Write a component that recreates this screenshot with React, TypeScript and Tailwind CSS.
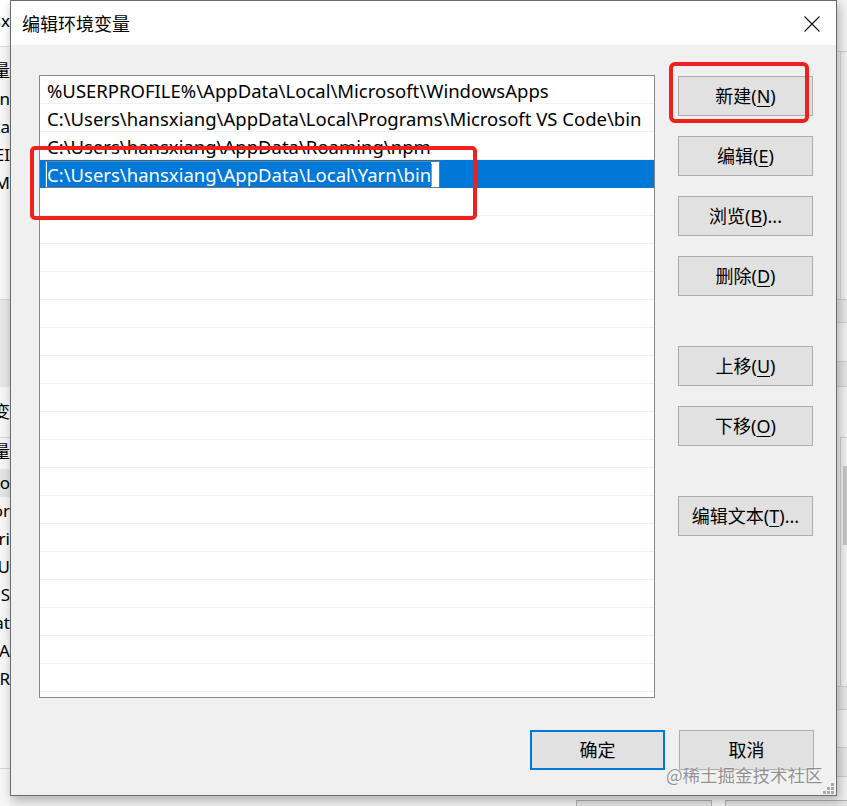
import React from "react"

const PATHS = [
  "%USERPROFILE%\\AppData\\Local\\Microsoft\\WindowsApps",
  "C:\\Users\\hansxiang\\AppData\\Local\\Programs\\Microsoft VS Code\\bin",
  "C:\\Users\\hansxiang\\AppData\\Roaming\\npm",
]
const EDITING = "C:\\Users\\hansxiang\\AppData\\Local\\Yarn\\bin"
const EMPTY_ROWS = Array.from({ length: 19 })

function Btn({ children, primary = false }: { children: React.ReactNode; primary?: boolean }) {
  return (
    <div
      className={`flex h-10 w-[135px] shrink-0 items-center justify-center bg-[#e1e1e1] text-[18px] leading-none text-black ${
        primary ? "border-2 border-[#0078d7]" : "border border-[#adadad]"
      }`}
    >
      {children}
    </div>
  )
}

function Key({ label, k, tail = "" }: { label: string; k: string; tail?: string }) {
  return (
    <span className="whitespace-nowrap">
      {label}(<span className="underline underline-offset-[3px] decoration-1">{k}</span>){tail}
    </span>
  )
}

// partial text of the window behind the dialog, clipped on the right edge
function Peek({ text, className = "" }: { text: string; className?: string }) {
  return (
    <div className={`flex h-[28px] items-center justify-end overflow-hidden whitespace-nowrap text-[17px] ${className}`}>
      {text}
    </div>
  )
}

export default function App() {
  return (
    <div className="relative h-[806px] w-[847px] overflow-hidden bg-[#f0f0f0] font-['Noto_Sans','Noto_Sans_CJK_SC',sans-serif] text-black">
      {/* window behind: left strip */}
      <div className="absolute left-0 top-0 flex h-full w-[10px] flex-col overflow-hidden bg-[#f6f6f6]">
        <div className="flex h-[47px] items-center justify-end overflow-hidden whitespace-nowrap border-b border-[#dcdcdc] bg-white pb-1 text-[17px]">
          Path sx
        </div>
        <div className="h-[10px]" />
        <Peek text="环境变量" />
        <Peek text="Python" />
        <Peek text="Data" />
        <Peek text="TEMP_EI" />
        <Peek text="TEM" />
        <div className="h-[102px]" />
        <div className="h-[88px] border-t border-[#d4d4d4] bg-[#e6e6e6]" />
        <Peek text="系统变" className="h-[50px]" />
        <div className="border-t border-[#d4d4d4]" />
        <Peek text="环境变量" />
        <Peek text="Co" className="mt-[3px] bg-[#e4e4e4]" />
        <Peek text="Dor" />
        <Peek text="Dri" />
        <Peek text="NU" />
        <Peek text="OS" />
        <Peek text="Pat" />
        <Peek text="PA" />
        <Peek text="PR" />
        <div className="h-[76px] border-b border-[#d4d4d4]" />
      </div>

      {/* window behind: right strip */}
      <div className="absolute right-0 top-0 flex h-full w-[11px] flex-col bg-[#f0f0f0]">
        <div className="h-[52px] border-b border-[#cfcfcf] bg-[#f3f3f3]" />
        <div className="ml-[4px] h-[247px] border-l border-[#d8d8d8]" />
        <div className="h-[23px] border-t border-[#cfcfcf] bg-[#e6e6e6]" />
        <div className="h-[39px] border-t border-[#cfcfcf]" />
        <div className="h-[25px] border-t border-[#cfcfcf] bg-[#e3e3e3]" />
        <div className="h-[51px] border-t border-[#cfcfcf]" />
        <div className="ml-[4px] flex h-[249px] justify-end border-l border-t border-[#cfcfcf]">
          <div className="mt-[28px] h-[79px] w-[4px] bg-[#c4c4c4]" />
        </div>
        <div className="h-[23px] border-t border-[#cfcfcf] bg-[#e4e4e4]" />
        <div className="h-[38px] border-t border-[#cfcfcf]" />
        <div className="h-[29px] border-t border-[#cfcfcf] bg-[#e6e6e6]" />
        <div className="flex-1 border-t border-[#cfcfcf]" />
      </div>

      {/* window behind: bottom buttons peeking out */}
      <div className="absolute left-[576px] top-[800px] h-[20px] w-[136px] border border-[#adadad] bg-[#e1e1e1]" />
      <div className="absolute left-[725px] top-[800px] h-[20px] w-[136px] border border-[#adadad] bg-[#e1e1e1]" />

      {/* dialog */}
      <div className="absolute left-[10px] top-0 flex h-[796px] w-[827px] flex-col border border-[#6b6b6b] bg-[#f0f0f0] shadow-[2px_4px_10px_rgba(0,0,0,0.28)]">
        <div className="flex h-[44px] shrink-0 items-center justify-between bg-white pl-[11px] pr-[16px]">
          <span className="text-[18px] leading-none font-['Noto_Sans_CJK_SC',sans-serif]">编辑环境变量</span>
          <svg width="16" height="16" viewBox="0 0 16 16" className="mt-px">
            <path d="M0.5 0.5 L15.5 15.5 M15.5 0.5 L0.5 15.5" stroke="#111" strokeWidth="1.1" fill="none" />
          </svg>
        </div>

        <div className="flex flex-1 flex-col pl-[28px] pr-[22px] pt-[30px]">
          <div className="flex">
            <div className="flex h-[623px] w-[616px] flex-col overflow-hidden border border-[#828790] bg-white">
              {PATHS.map((p) => (
                <div key={p} className="flex h-[28px] shrink-0 items-center whitespace-nowrap border-b border-[#f0f0f0] pl-[7px] pt-[3px] text-[18.5px] leading-none">
                  {p}
                </div>
              ))}
              <div className="flex h-[28px] shrink-0 items-center bg-[#0078d7] pl-[5px]">
                <div className="mt-px flex h-[27px] w-[395px] items-center border border-[#7a7a7a] bg-white pl-px">
                  <span className="whitespace-nowrap bg-[#0078d7] pb-[2px] pt-[4px] text-[18.5px] leading-none text-white">{EDITING}</span>
                  <span className="h-[22px] w-px bg-[#e08a2a]" />
                </div>
              </div>
              {EMPTY_ROWS.map((_, i) => (
                <div key={i} className="h-[28px] shrink-0 border-b border-[#f0f0f0]" />
              ))}
            </div>

            <div className="ml-[23px] mt-px flex flex-col gap-5">
              <Btn>
                <Key label="新建" k="N" />
              </Btn>
              <Btn>
                <Key label="编辑" k="E" />
              </Btn>
              <Btn>
                <Key label="浏览" k="B" tail="..." />
              </Btn>
              <Btn>
                <Key label="删除" k="D" />
              </Btn>
              <div className="h-[10px]" />
              <Btn>
                <Key label="上移" k="U" />
              </Btn>
              <Btn>
                <Key label="下移" k="O" />
              </Btn>
              <div className="h-[10px]" />
              <Btn>
                <Key label="编辑文本" k="T" tail="..." />
              </Btn>
            </div>
          </div>

          <div className="mt-[32px] flex justify-end gap-[14px]">
            <Btn primary>确定</Btn>
            <Btn>取消</Btn>
          </div>
        </div>
      </div>

      {/* red annotation frames */}
      <div className="absolute left-[669px] top-[62px] h-[61px] w-[140px] rounded-[6px] border-[4px] border-[#f0201c]" />
      <div className="absolute left-[30px] top-[146px] h-[74px] w-[447px] rounded-[5px] border-[4px] border-[#f0201c]" />

      {/* watermark */}
      <div className="absolute left-[666px] top-[762px] whitespace-nowrap text-[17.5px] leading-[26px] text-[rgba(110,110,110,0.75)] [text-shadow:0_0_2px_#fff] font-['Noto_Sans_CJK_SC',sans-serif]">
        @稀土掘金技术社区
      </div>

      {/* resize grip */}
      <svg className="absolute left-[823px] top-[783px]" width="12" height="12" viewBox="0 0 12 12">
        {[
          [8, 0],
          [4, 4],
          [8, 4],
          [0, 8],
          [4, 8],
          [8, 8],
        ].map(([x, y]) => (
          <rect key={`${x}-${y}`} x={x} y={y} width="3" height="3" fill="#a8a8a8" />
        ))}
      </svg>
    </div>
  )
}
